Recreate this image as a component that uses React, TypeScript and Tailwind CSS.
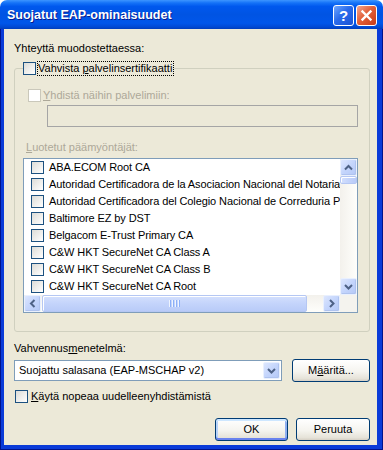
import React from "react";

const chev: Record<string, string> = {
  up: "M4 9.5 L7.5 6 L11 9.5",
  down: "M4 6 L7.5 9.5 L11 6",
  left: "M9.5 4 L6 7.5 L9.5 11",
  right: "M6 4 L9.5 7.5 L6 11",
};

function ArrowBtn({ dir }: { dir: "up" | "down" | "left" | "right" }) {
  return (
    <div className="w-[17px] h-[17px] shrink-0 rounded-[2px] border border-[#E9F0FE] bg-[linear-gradient(135deg,#DCE6FE,#C4D5FC_50%,#B4C8F6)] shadow-[inset_-1px_-1px_0_#AFC3EF]">
      <svg width="15" height="15" viewBox="0 0 15 15">
        <path d={chev[dir]} fill="none" stroke="#4D6185" strokeWidth="2" />
      </svg>
    </div>
  );
}

function Box({ disabled }: { disabled?: boolean }) {
  return (
    <span
      className={
        disabled
          ? "block w-[13px] h-[13px] shrink-0 border border-[#CAC8BB] bg-white"
          : "block w-[13px] h-[13px] shrink-0 border border-[#1C5180] bg-[linear-gradient(135deg,#DCDCD7,#FFFFFF)]"
      }
    />
  );
}

const rows = [
  "ABA.ECOM Root CA",
  "Autoridad Certificadora de la Asociacion Nacional del Notariado Mexicano",
  "Autoridad Certificadora del Colegio Nacional de Correduria Publica Mexicana",
  "Baltimore EZ by DST",
  "Belgacom E-Trust Primary CA",
  "C&W HKT SecureNet CA Class A",
  "C&W HKT SecureNet CA Class B",
  "C&W HKT SecureNet CA Root",
];

function Grip() {
  return (
    <div className="flex gap-[1px]">
      {[0, 1, 2, 3].map((i) => (
        <div key={i} className="flex">
          <span className="block w-[1px] h-[7px] bg-[#EEF4FE]" />
          <span className="block w-[1px] h-[7px] bg-[#8CB0F8]" />
        </div>
      ))}
    </div>
  );
}

const btn =
  "h-[23px] rounded-[3px] border border-[#003C74] bg-[linear-gradient(to_bottom,#FFFFFF,#F5F4EF_55%,#E6E3D9_88%,#D6D0C5)] flex items-center justify-center text-[11px] text-black";

export default function App() {
  return (
    <div className="w-[383px] h-[450px] flex flex-col bg-white font-['Liberation_Sans',Arial,sans-serif] text-[11px] leading-[13px] text-black select-none">
      {/* Title bar */}
      <div className="h-[29px] shrink-0 rounded-t-[7px] bg-[linear-gradient(to_bottom,#3D95FF_0%,#1573F8_10%,#0058EE_22%,#0054E3_50%,#0056EA_80%,#0049D4_93%,#003DBB_100%)] flex items-start pl-[7px] pr-[6px] pt-[5px]">
        <div className="flex-1 pt-[3px] text-[12.5px] leading-[14px] font-bold text-white [text-shadow:1px_1px_0_#0A1A8C]">
          Suojatut EAP-ominaisuudet
        </div>
        <div className="flex gap-[2px]">
          <div className="w-[21px] h-[21px] rounded-[3px] border border-white bg-[linear-gradient(135deg,#6EA7FF,#2A6BEB_45%,#1B52D4)] flex items-center justify-center text-white font-bold text-[15px] leading-[15px]">
            ?
          </div>
          <div className="w-[21px] h-[21px] rounded-[3px] border border-white bg-[linear-gradient(135deg,#F3A68F,#E2603A_45%,#C73A17)] flex items-center justify-center">
            <svg width="13" height="13" viewBox="0 0 13 13">
              <path d="M2.5 2.5 L10.5 10.5 M10.5 2.5 L2.5 10.5" stroke="#FFFFFF" strokeWidth="2.4" strokeLinecap="square" />
            </svg>
          </div>
        </div>
      </div>

      {/* Frame + client */}
      <div className="flex-1 flex flex-col bg-[#0A3BD8] border-l border-r border-b border-[#00138C] pl-[3px] pr-[5px] pb-[4px]">
        <div className="flex-1 bg-[#ECE9D8] flex flex-col pl-[10px] pr-[7px]">
          <div className="mt-[13px] h-[13px]">Yhteyttä muodostettaessa:</div>

          <fieldset className="mt-[6px] border border-[#D0D0BF] rounded-[3px] pl-[8px] pr-[11px] pt-[13px] pb-[18px] min-w-0">
            <legend className="p-0">
              <span className="flex items-center">
                <Box />
                <span className="ml-[1px] h-[15px] border border-dotted border-black leading-[13px] pr-[1px]">
                  Vahvista <span className="underline">p</span>alvelinsertifikaatti
                </span>
              </span>
            </legend>

            <div className="flex items-center h-[13px] pl-[5px]">
              <Box disabled />
              <span className="ml-[2px] text-[#ACA899]">
                <span className="underline">Y</span>hdistä näihin palvelimiin:
              </span>
            </div>

            <div className="mt-[3px] ml-[24px] h-[22px] border border-[#A5A5A5] bg-[#ECE9D8]" />

            <div className="mt-[14px] ml-[3px] h-[13px] text-[#ACA899]">
              <span className="underline">L</span>uotetut päämyöntäjät:
            </div>

            <div className="mt-[4px] h-[155px] border border-[#7F9DB9] bg-white flex flex-col">
              <div className="flex h-[136px]">
                <div className="flex-1 min-w-0 overflow-hidden flex flex-col">
                  {rows.map((r) => (
                    <div key={r} className="h-[17px] shrink-0 flex items-center pl-[7px] whitespace-nowrap tracking-[-0.1px]">
                      <Box />
                      <span className="ml-[5px]">{r}</span>
                    </div>
                  ))}
                </div>
                <div className="w-[17px] shrink-0 flex flex-col bg-[linear-gradient(to_right,#F3F1EC,#FEFEFB)]">
                  <ArrowBtn dir="up" />
                  <div className="h-[8px] rounded-[2px] border border-[#B5C7F3] bg-[linear-gradient(to_right,#D4E0FD,#C4D4FB_50%,#B9CBF8)] shadow-[inset_1px_1px_0_#FFFFFF]" />
                  <div className="flex-1" />
                  <ArrowBtn dir="down" />
                </div>
              </div>
              <div className="flex h-[17px]">
                <div className="flex-1 flex bg-[linear-gradient(to_bottom,#F3F1EC,#FEFEFB)]">
                  <ArrowBtn dir="left" />
                  <div className="ml-[1px] w-[265px] h-[17px] rounded-[2px] border border-[#B5C7F3] bg-[linear-gradient(to_bottom,#D4E0FD,#C4D4FB_50%,#B9CBF8)] shadow-[inset_1px_1px_0_#FFFFFF] flex items-center justify-center">
                    <Grip />
                  </div>
                  <div className="flex-1" />
                  <ArrowBtn dir="right" />
                </div>
                <div className="w-[17px] bg-[#F4F3EE]" />
              </div>
            </div>
          </fieldset>

          <div className="mt-[10px] h-[13px]">
            Vahvennus<span className="underline">m</span>enetelmä:
          </div>

          <div className="mt-[4px] flex items-center h-[23px]">
            <div className="w-[268px] h-[21px] border border-[#7F9DB9] bg-white flex items-center p-[1px]">
              <span className="flex-1 pl-[3px] whitespace-nowrap">Suojattu salasana (EAP-MSCHAP v2)</span>
              <ArrowBtn dir="down" />
            </div>
            <div className={btn + " ml-[10px] w-[78px]"}>
              M<span className="underline">ä</span>äritä...
            </div>
          </div>

          <div className="mt-[8px] flex items-center h-[13px] pl-[1px]">
            <Box />
            <span className="ml-[3px]">
              <span className="underline">K</span>äytä nopeaa uudelleenyhdistämistä
            </span>
          </div>

          <div className="mt-[15px] flex justify-end gap-[8px]">
            <div className={btn + " w-[73px] shadow-[inset_0_2px_0_#CEE7FF,inset_0_-2px_0_#6982EE,inset_2px_0_0_#B8D3F9,inset_-2px_0_0_#8FAFF0]"}>
              OK
            </div>
            <div className={btn + " w-[74px]"}>Peruuta</div>
          </div>
        </div>
      </div>
    </div>
  );
}
